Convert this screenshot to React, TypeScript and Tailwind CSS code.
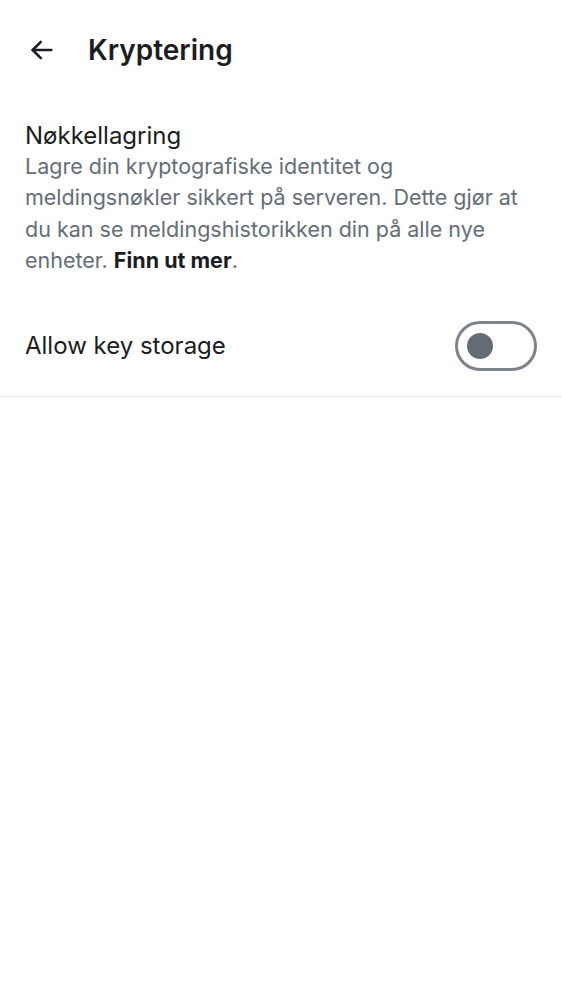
export default function App() {
  return (
    <div className="min-h-screen bg-white" style={{ fontFamily: "Inter, 'Noto Sans', sans-serif" }}>
      <div className="flex h-[100px] items-center px-[28px]">
        <svg width="28" height="28" viewBox="0 0 24 24" fill="none" stroke="#1b1d22" strokeWidth="2.2" strokeLinecap="round" strokeLinejoin="round">
          <path d="M20 12H4" />
          <path d="M11 5l-7 7 7 7" />
        </svg>
        <h1 className="ml-[32px] text-[28px] font-semibold text-[#1b1d22]">Kryptering</h1>
      </div>
      <div className="pl-[25px] pr-[20px] pt-[20px]">
        <div className="text-[24px] leading-[31px] text-[#1b1d22]">Nøkkellagring</div>
        <p className="text-[21.5px] leading-[31.3px] text-[#656d77]">
          Lagre din kryptografiske identitet og meldingsnøkler sikkert på serveren. Dette gjør at du kan se meldingshistorikken din på alle nye enheter.{" "}
          <span className="font-bold text-[#1b1d22]">Finn ut mer</span>.
        </p>
      </div>
      <div className="flex items-center justify-between border-b border-[#e9ebed] px-[25px] pb-[25px] pt-[45px]">
        <span className="text-[24px] text-[#1b1d22]">Allow key storage</span>
        <div className="flex h-[50px] w-[82px] items-center rounded-full border-[3px] border-[#7d848e] pl-[9px]">
          <div className="h-[26px] w-[26px] rounded-full bg-[#656c76]" />
        </div>
      </div>
    </div>
  );
}
